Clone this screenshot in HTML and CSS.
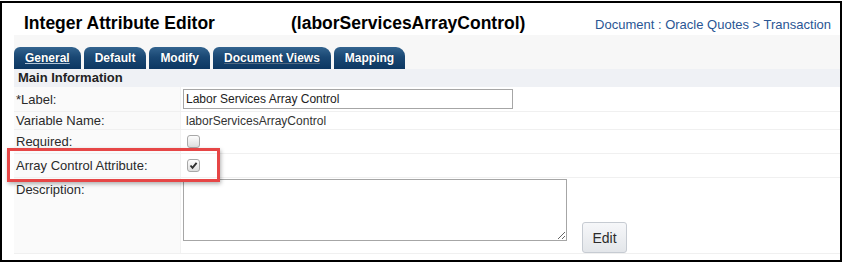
FILE: index.html
```html
<!DOCTYPE html>
<html lang="en">

<head>
    <meta charset="UTF-8">
    <title>Integer Attribute Editor</title>
    <link rel="stylesheet" href="styles.css">
</head>

<body>
    <div class="frame">
        <div class="editor">
            <div class="title-bar">
                <h1 class="title">Integer Attribute Editor</h1>
                <h1 class="title var-name">(laborServicesArrayControl)</h1>
                <a class="crumb" href="#">Document : Oracle Quotes &gt; Transaction</a>
            </div>

            <div class="tabs">
                <span class="tab active">General</span>
                <span class="tab">Default</span>
                <span class="tab">Modify</span>
                <span class="tab faint">Document Views</span>
                <span class="tab">Mapping</span>
            </div>

            <div class="section-head">Main Information</div>

            <div class="row first">
                <div class="label">*Label:</div>
                <div class="value"><input class="text-input" type="text" value="Labor Services Array Control"></div>
            </div>
            <div class="row short">
                <div class="label">Variable Name:</div>
                <div class="value"><span class="plain">laborServicesArrayControl</span></div>
            </div>
            <div class="row">
                <div class="label">Required:</div>
                <div class="value"><span class="check"></span></div>
            </div>
            <div class="row">
                <div class="label">Array Control Attribute:</div>
                <div class="value">
                    <span class="check">
                        <svg width="11" height="11" viewBox="0 0 11 11"><path d="M2.5 5.5 L4.5 7.8 L8.6 2.8" fill="none" stroke="#2e2e2e" stroke-width="1.9"/></svg>
                    </span>
                </div>
            </div>
            <div class="row tall">
                <div class="label top">Description:</div>
                <div class="value top">
                    <textarea class="desc"></textarea>
                    <button class="edit-btn">Edit</button>
                </div>
            </div>
        </div>

        <div class="highlight"></div>
    </div>
</body>

</html>
```

FILE: styles.css
```css
body {
    margin: 0;
    padding-top: 1px;
    font-family: "Liberation Sans", Arial, sans-serif;
    background: #fff;
}

.frame {
    position: relative;
    width: 838px;
    border: 2px solid #000;
    background: #fff;
}

.editor {
    margin-left: 12px;
    padding: 9px 0 6px 0;
}

.title-bar {
    display: flex;
    align-items: baseline;
    height: 23px;
    background: #fff;
}

.title {
    margin: 0;
    font-size: 17.5px;
    font-weight: bold;
    line-height: 23px;
    color: #000;
}

.title:first-child {
    width: 267px;
    padding-left: 10px;
}

.crumb {
    margin-left: auto;
    padding-right: 9px;
    font-size: 13px;
    color: #2a5694;
    text-decoration: none;
}

.tabs {
    display: flex;
    gap: 3px;
    padding-top: 12px;
    background: #f7f7f7;
}

.tab {
    height: 22px;
    line-height: 22px;
    padding: 0 11px;
    font-size: 12px;
    font-weight: bold;
    color: #fff;
    background: linear-gradient(#33648f, #1a4874 45%, #0c3762);
    border-radius: 6px 9px 0 0;
    text-shadow: 0 0 1px #06284a;
}

.tab.active {
    text-decoration: underline;
    text-decoration-color: rgba(220, 234, 247, 0.8);
}

.tab.faint {
    text-decoration: underline;
    text-decoration-color: rgba(255, 255, 255, 0.3);
}

.section-head {
    height: 18px;
    line-height: 18px;
    padding-left: 4px;
    font-size: 13px;
    font-weight: bold;
    color: #222;
    background: #eff1f5;
}

.row {
    display: grid;
    grid-template-columns: 167px 1fr;
    height: 23px;
    border-bottom: 1px solid #f0f0f0;
}

.row.first {
    height: 24px;
}

.row.short {
    height: 17px;
}

.row.tall {
    height: 75px;
}

.label {
    display: flex;
    align-items: center;
    padding-left: 2px;
    font-size: 13px;
    color: #2a2a2a;
    background: #fafafa;
    border-right: 1px solid #f2f2f2;
}

.label.top {
    align-items: flex-start;
    padding-top: 4px;
}

.value {
    display: flex;
    align-items: center;
    padding-left: 2px;
}

.value.top {
    align-items: flex-start;
    padding-top: 1px;
}

.text-input {
    box-sizing: border-box;
    width: 330px;
    height: 20px;
    margin: 0;
    padding: 0 2px;
    border: 1px solid #a6a6a6;
    font-family: "Liberation Sans", Arial, sans-serif;
    font-size: 12px;
    color: #222;
}

.plain {
    padding-left: 3px;
    font-size: 12px;
    color: #333;
}

.check {
    box-sizing: border-box;
    display: flex;
    align-items: center;
    justify-content: center;
    width: 13px;
    height: 13px;
    margin-left: 4px;
    border: 1px solid #a8a8a8;
    border-radius: 3px;
    background: linear-gradient(#fdfdfd, #dedede);
}

.desc {
    box-sizing: border-box;
    width: 384px;
    height: 62px;
    margin: 0;
    border: 1px solid #a6a6a6;
}

.edit-btn {
    align-self: flex-end;
    box-sizing: border-box;
    width: 45px;
    height: 31px;
    margin-left: 15px;
    padding: 0;
    font-family: "Liberation Sans", Arial, sans-serif;
    font-size: 14px;
    color: #2b2b2b;
    background: linear-gradient(#f6f7f9, #e3e6ea);
    border: 1px solid #c6cbd2;
    border-radius: 3px;
}

.highlight {
    position: absolute;
    left: 5px;
    top: 145px;
    box-sizing: border-box;
    width: 213px;
    height: 34px;
    border: 3px solid #e64646;
    box-shadow: 1px 2px 4px rgba(0, 0, 0, 0.3);
}
```
